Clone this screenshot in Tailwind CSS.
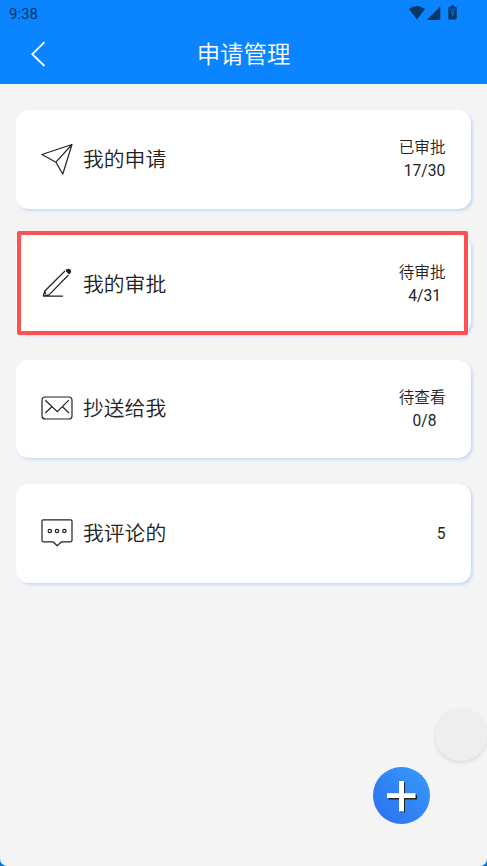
<!DOCTYPE html>
<html lang="zh-CN">
<head>
<meta charset="utf-8">
<title>申请管理</title>
<script src="https://cdn.jsdelivr.net/npm/@tailwindcss/browser@4"></script>
</head>
<body class="bg-[#0870c8]">
<div class="relative h-[866px] w-[487px] overflow-hidden rounded-b-[7px] bg-[#f4f4f4] font-['Roboto','Noto_Sans_CJK_SC',sans-serif] text-[#222222]">
  <header class="h-[84.3px] bg-[#0b84ff]">
    <div class="flex h-[27px] items-center justify-between pl-[9px] pr-[29px] text-[#073765]">
      <span class="pt-px text-[15px] font-[450] leading-[27px]">9:38</span>
      <svg class="h-[27px] w-[50px]" viewBox="0 0 50 27" fill="currentColor">
        <path d="M1 9Q9 3.2 17 9L9 19.5Z"/>
        <path d="M32.3 6.5V20H18.8Z"/>
        <path d="M41.5 6.8h1.5V5.2h3v1.6h1.5q1.2 0 1.2 1.2v10.3q0 1.3-1.2 1.3h-6q-1.2 0-1.2-1.3V8q0-1.2 1.2-1.2Z"/>
        <path d="m45 9.2-2 3.8h1.5v3.3l2-4H45ZM42.4 8.2v2.2M46.7 8.2v2.2" fill="none" stroke="#0b75df" stroke-width=".8"/>
      </svg>
    </div>
    <div class="grid h-[54px] grid-cols-[100px_1fr_100px] items-center text-white">
      <svg class="ml-[30px] h-[26px] w-[16px]" viewBox="0 0 16 26" fill="none" stroke="currentColor" stroke-width="1.8"><path d="M14.5 1.2 2.3 13.2 14.5 25"/></svg>
      <h1 class="pt-[3px] text-center text-[23.4px] font-[350]">申请管理</h1>
    </div>
  </header>
  <main class="flex flex-col gap-[26px] pl-4 pr-[16px] pt-[26px]">
    <section class="flex h-[98.7px] items-center rounded-[13px] bg-white pl-[25px] pr-[25.5px] shadow-[2px_2px_3px_#cbdaf7]">
      <svg class="mb-[2px] size-8" viewBox="0 0 32 32" fill="none" stroke="currentColor" stroke-width="1.2" stroke-linejoin="round"><path d="M31 1.5.9 11.5l14 7.7L21.8 31ZM31 1.5 14.9 19.2"/></svg>
      <h2 class="ml-[10px] flex-1 pt-px text-[20.8px] font-[350]">我的申请</h2>
      <div class="text-center text-[15.6px] leading-6"><p class="font-[350]">已审批</p><p class="-mt-px pl-[5px]">17/30</p></div>
    </section>
    <section class="relative flex h-[98.7px] items-center rounded-[13px] bg-white pl-[25px] pr-[25.5px] shadow-[2px_2px_3px_#cbdaf7]">
      <svg class="mb-[2px] size-8" viewBox="0 0 32 32" fill="none" stroke="currentColor" stroke-width="1.2" stroke-linejoin="round"><path d="M2.2 29 3.8 24 24 4M8 27.8 27.5 8M2.2 29 8 27.8M3.8 24l.8 3.4M2 29.2h20"/><path d="M24.5 2.8 27 1.7q3 0 3.1 3.1l-1.2 2.5-1.6-.6-2-2Z" fill="currentColor" stroke="none"/></svg>
      <h2 class="ml-[10px] flex-1 pt-[2px] text-[20.8px] font-[350]">我的审批</h2>
      <div class="text-center text-[15.6px] leading-6"><p class="font-[350]">待审批</p><p class="-mt-px pl-[5px]">4/31</p></div>
      <div class="absolute -top-[4px] left-[1px] h-[104px] w-[451px] rounded-[2px] border-4 border-[#fc5254]"></div>
    </section>
    <section class="flex h-[98.7px] items-center rounded-[13px] bg-white pl-[25px] pr-[25.5px] shadow-[2px_2px_3px_#cbdaf7]">
      <svg class="mb-[2px] size-8" viewBox="0 0 32 32" fill="none" stroke="currentColor" stroke-width="1.2"><rect x="1" y="5" width="30" height="22" rx="3.3"/><path d="m4.3 8.2 12 11.5 11.5-11.5M4.3 21l6.5-6.2M28 21l-6.5-6.2"/></svg>
      <h2 class="ml-[10px] flex-1 pt-px text-[20.8px] font-[350]">抄送给我</h2>
      <div class="text-center text-[15.6px] leading-6"><p class="font-[350]">待查看</p><p class="-mt-px pl-[5px]">0/8</p></div>
    </section>
    <section class="flex h-[98.7px] items-center rounded-[13px] bg-white pl-[25px] pr-[25.5px] shadow-[2px_2px_3px_#cbdaf7]">
      <svg class="mb-px size-8" viewBox="0 0 32 32" fill="none" stroke="currentColor" stroke-width="1.2" stroke-linejoin="round"><path d="M2.2 2.8h27.6q1.2 0 1.2 1.2v19.6q0 1.2-1.2 1.2h-9.3L16.2 28.8 12 24.8H2.2q-1.2 0-1.2-1.2V4q0-1.2 1.2-1.2Z"/><circle cx="8.8" cy="14" r="1.7"/><circle cx="16" cy="14" r="1.7"/><circle cx="23.4" cy="14" r="1.7"/></svg>
      <h2 class="ml-[10px] flex-1 pt-px text-[20.8px] font-[350]">我评论的</h2>
      <p class="text-[15.6px] leading-6">5</p>
    </section>
  </main>
  <div class="absolute left-[434.5px] top-[708px] size-[52.5px] rounded-full bg-[#eeeeee] shadow-[0_2px_4px_#0000001a]"></div>
  <button aria-label="新建" class="absolute left-[373px] top-[767px] size-[57px] rounded-full bg-linear-to-tr from-[#2e6eee] to-[#379bfc]">
    <svg class="size-[57px]" viewBox="0 0 57 57"><path d="M27 15.5h5v12.2h12v4.8H32v12.8h-5V32.5H15.5v-4.8H27Z" fill="#222"/><path d="M26 14h5v12.2h11.5V31H31v13.5h-5V31H14v-4.8h12Z" fill="#fff"/></svg>
  </button>
</div>
</body>
</html>
